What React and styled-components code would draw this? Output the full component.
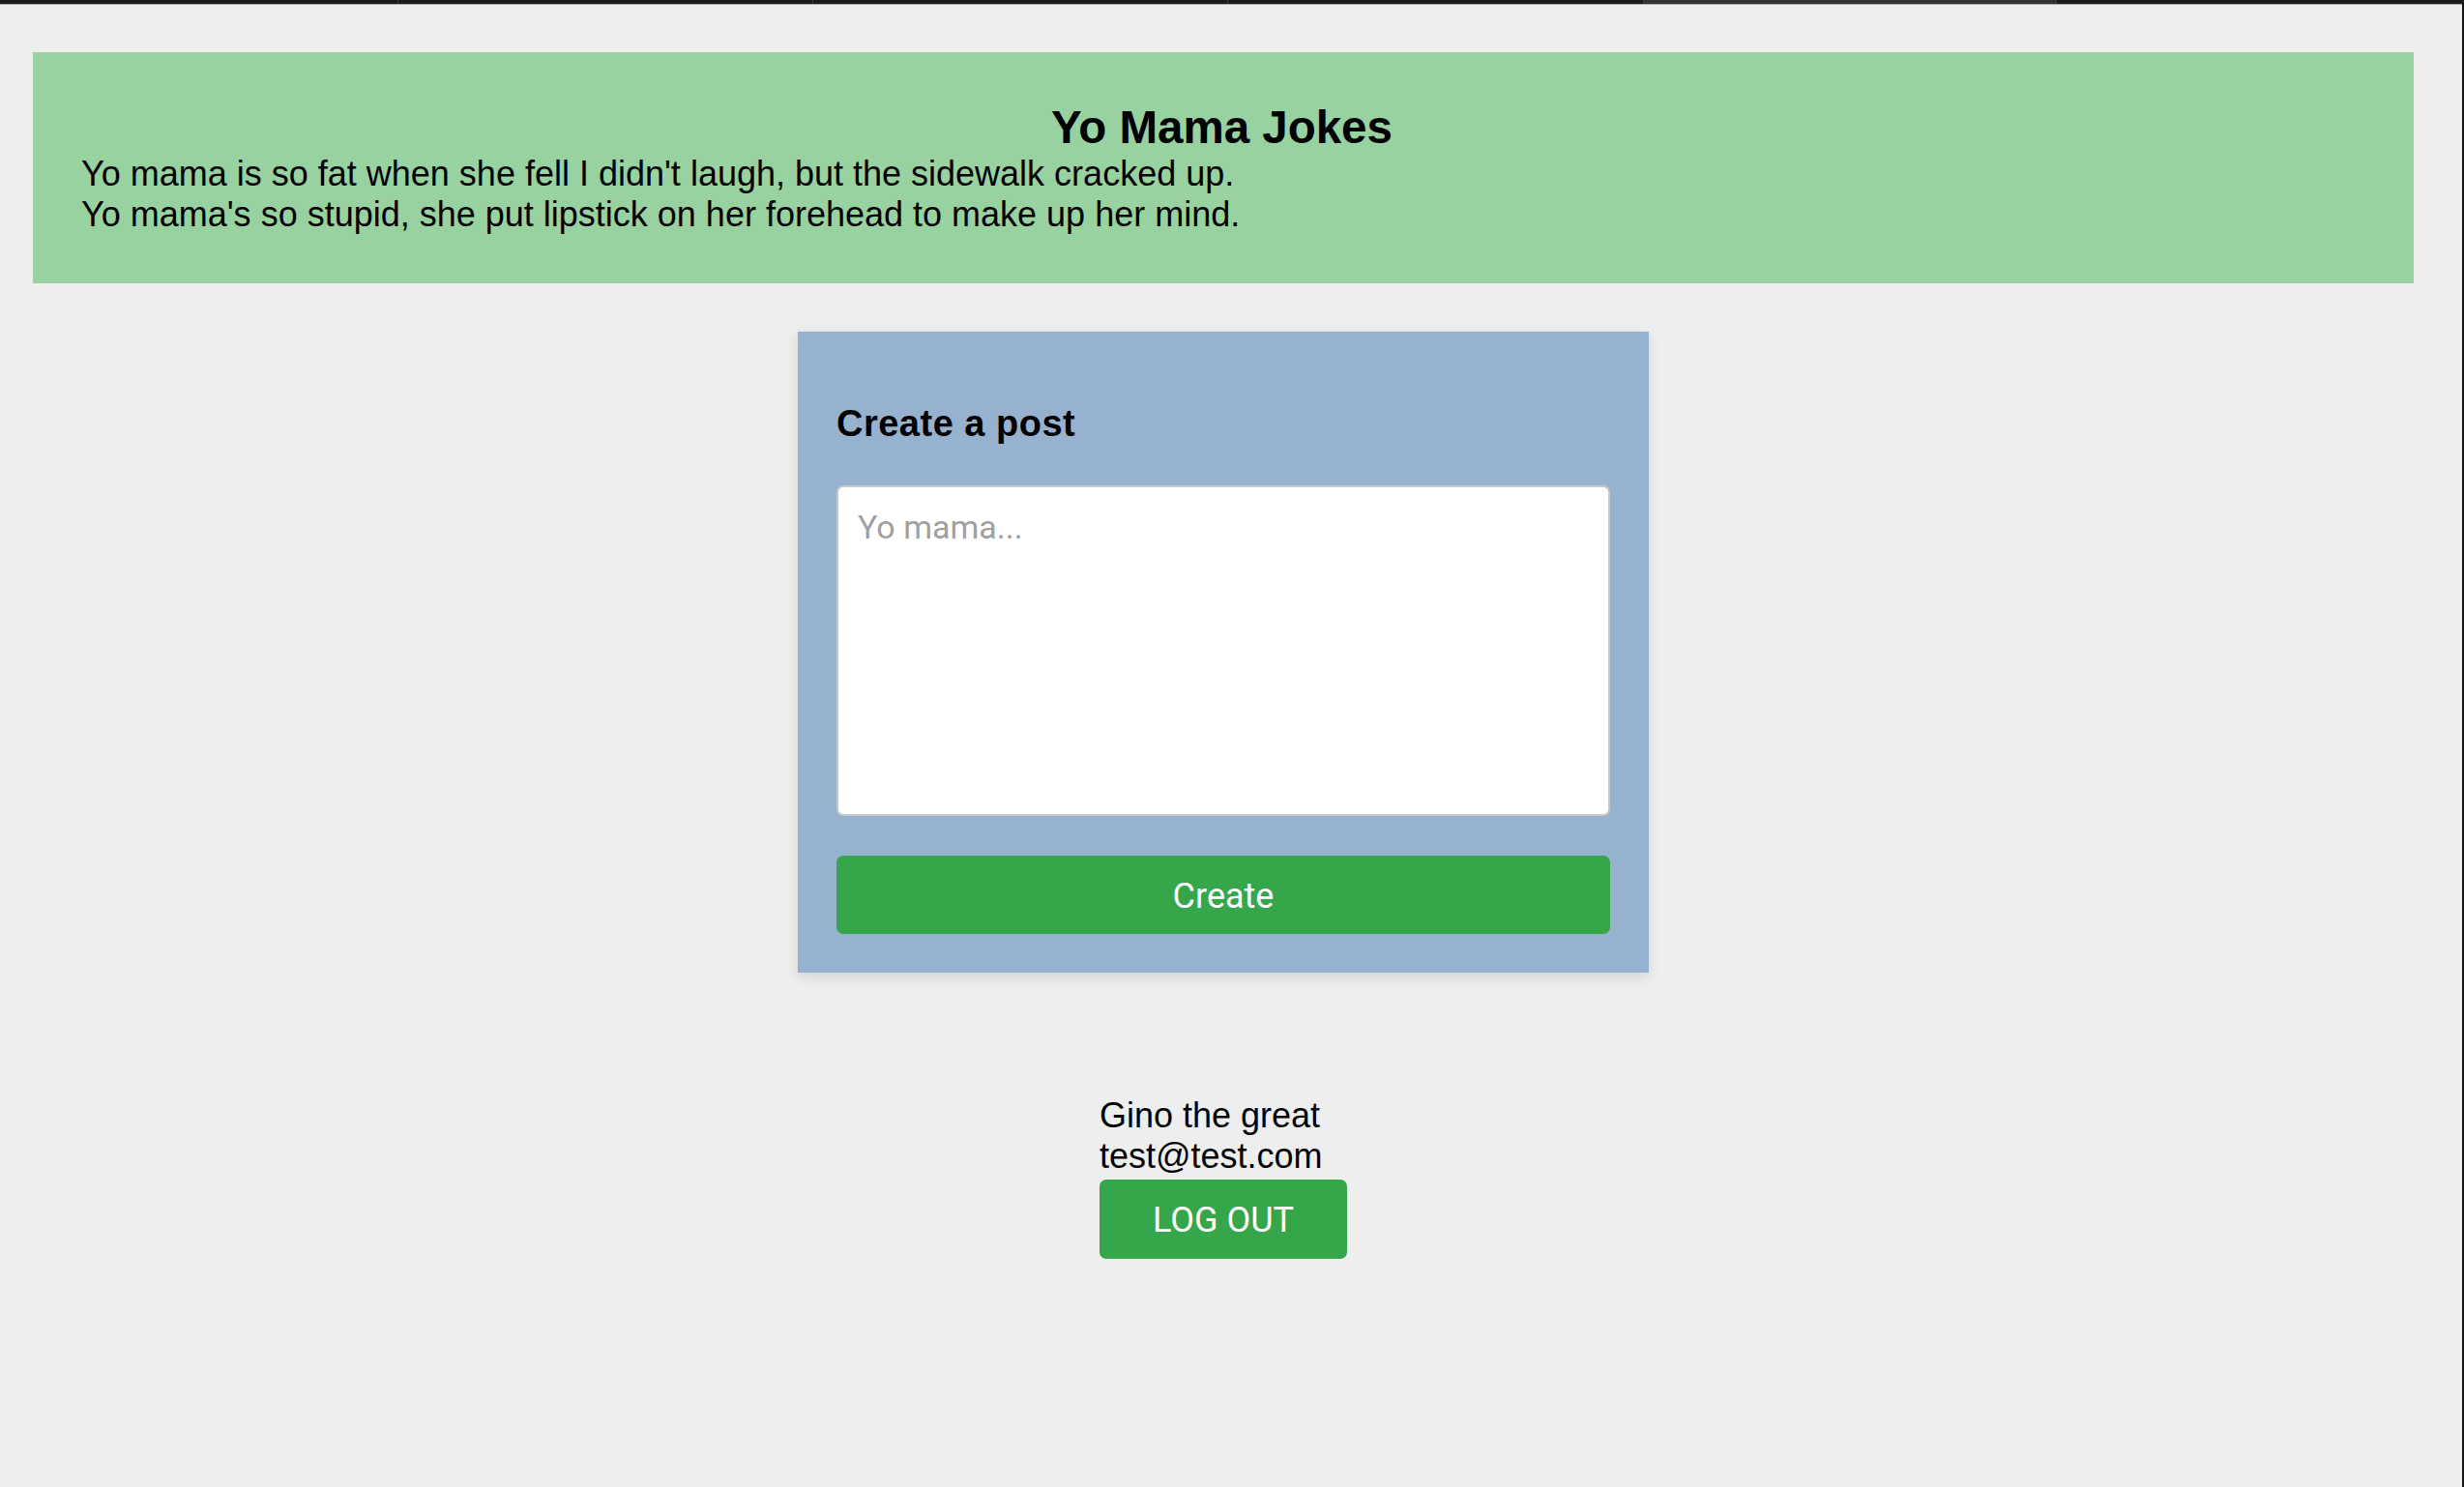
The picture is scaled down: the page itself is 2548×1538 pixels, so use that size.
import React from 'react';
import styled, { createGlobalStyle } from 'styled-components';

const GlobalStyle = createGlobalStyle`
    html, body {
        margin: 0;
        padding: 0;
        background: #eeeeee;
    }
    body {
        font-family: "Liberation Sans", Arial, sans-serif;
        color: #000;
    }
`;

const Frame = styled.div`
    min-height: 100vh;
    border-right: 2px solid #151515;
    box-sizing: border-box;
`;

const TabStrip = styled.div`
    display: flex;
    height: 4px;
    background: #1b1b1b;
    border-bottom: 1px solid #a9a9a9;
`;

const Tab = styled.div`
    flex: 0 0 ${props => props.width}px;
    background: ${props => props.active ? '#333133' : '#1b1b1b'};
    border-right: 1px solid #3c3c3c;
`;

const Main = styled.div`
    display: flex;
    flex-direction: column;
    align-items: center;
    padding: 49px 50px 60px 34px;
`;

const JokeBanner = styled.section`
    align-self: stretch;
    background: #98d2a0;
    padding: 50px 53px 50px 50px;
`;

const BannerTitle = styled.h1`
    margin: 0;
    text-align: center;
    font-size: 47.5px;
    font-weight: 700;
`;

const Joke = styled.div`
    font-size: 36px;
`;

const PostCard = styled.form`
    margin-top: 50px;
    width: 880px;
    box-sizing: border-box;
    padding: 40px;
    background: #97b2cf;
    box-shadow: 0 4px 12px rgba(0, 0, 0, 0.12);
    display: flex;
    flex-direction: column;
`;

const CardTitle = styled.h3`
    margin: 34px 0 42px;
    font-size: 38px;
    font-weight: 700;
    letter-spacing: 0.5px;
`;

const PostInput = styled.textarea`
    height: 342px;
    box-sizing: border-box;
    padding: 21px 20px;
    border: 2px solid #c6c8cc;
    border-radius: 7px;
    background: #fff;
    font-family: Roboto, "Liberation Sans", sans-serif;
    font-size: 34px;
    resize: none;
    outline: none;

    &::placeholder {
        color: #a0a0a0;
    }
`;

const GreenButton = styled.button`
    height: ${props => props.tall}px;
    border: none;
    border-radius: 7px;
    background: #35a74a;
    color: #fff;
    font-family: Roboto, "Liberation Sans", sans-serif;
    font-size: 36px;
    cursor: pointer;
`;

const CreateButton = styled(GreenButton)`
    margin-top: 41px;
    width: 100%;
    padding-top: 3px;
`;

const UserBox = styled.div`
    margin-top: 127px;
    display: flex;
    flex-direction: column;
    align-items: flex-start;
    font-size: 36px;
`;

const LogoutButton = styled(GreenButton)`
    margin-top: 3px;
    padding: 2px 55px 0;
`;

const tabs = [411, 428, 428, 429, 426, 424];

const App = () => {
    return (
        <>
            <GlobalStyle />
            <Frame>
                <TabStrip>
                    {tabs.map((w, i) => (
                        <Tab key={i} width={w} active={i === 4} />
                    ))}
                </TabStrip>
                <Main>
                    <JokeBanner>
                        <BannerTitle>Yo Mama Jokes</BannerTitle>
                        <Joke>Yo mama is so fat when she fell I didn't laugh, but the sidewalk cracked up.</Joke>
                        <Joke>Yo mama's so stupid, she put lipstick on her forehead to make up her mind.</Joke>
                    </JokeBanner>
                    <PostCard onSubmit={e => e.preventDefault()}>
                        <CardTitle>Create a post</CardTitle>
                        <PostInput placeholder="Yo mama..." />
                        <CreateButton type="submit" tall={81}>Create</CreateButton>
                    </PostCard>
                    <UserBox>
                        <div>Gino the great</div>
                        <div>test@test.com</div>
                        <LogoutButton type="button" tall={82}>LOG OUT</LogoutButton>
                    </UserBox>
                </Main>
            </Frame>
        </>
    );
};

export default App;
